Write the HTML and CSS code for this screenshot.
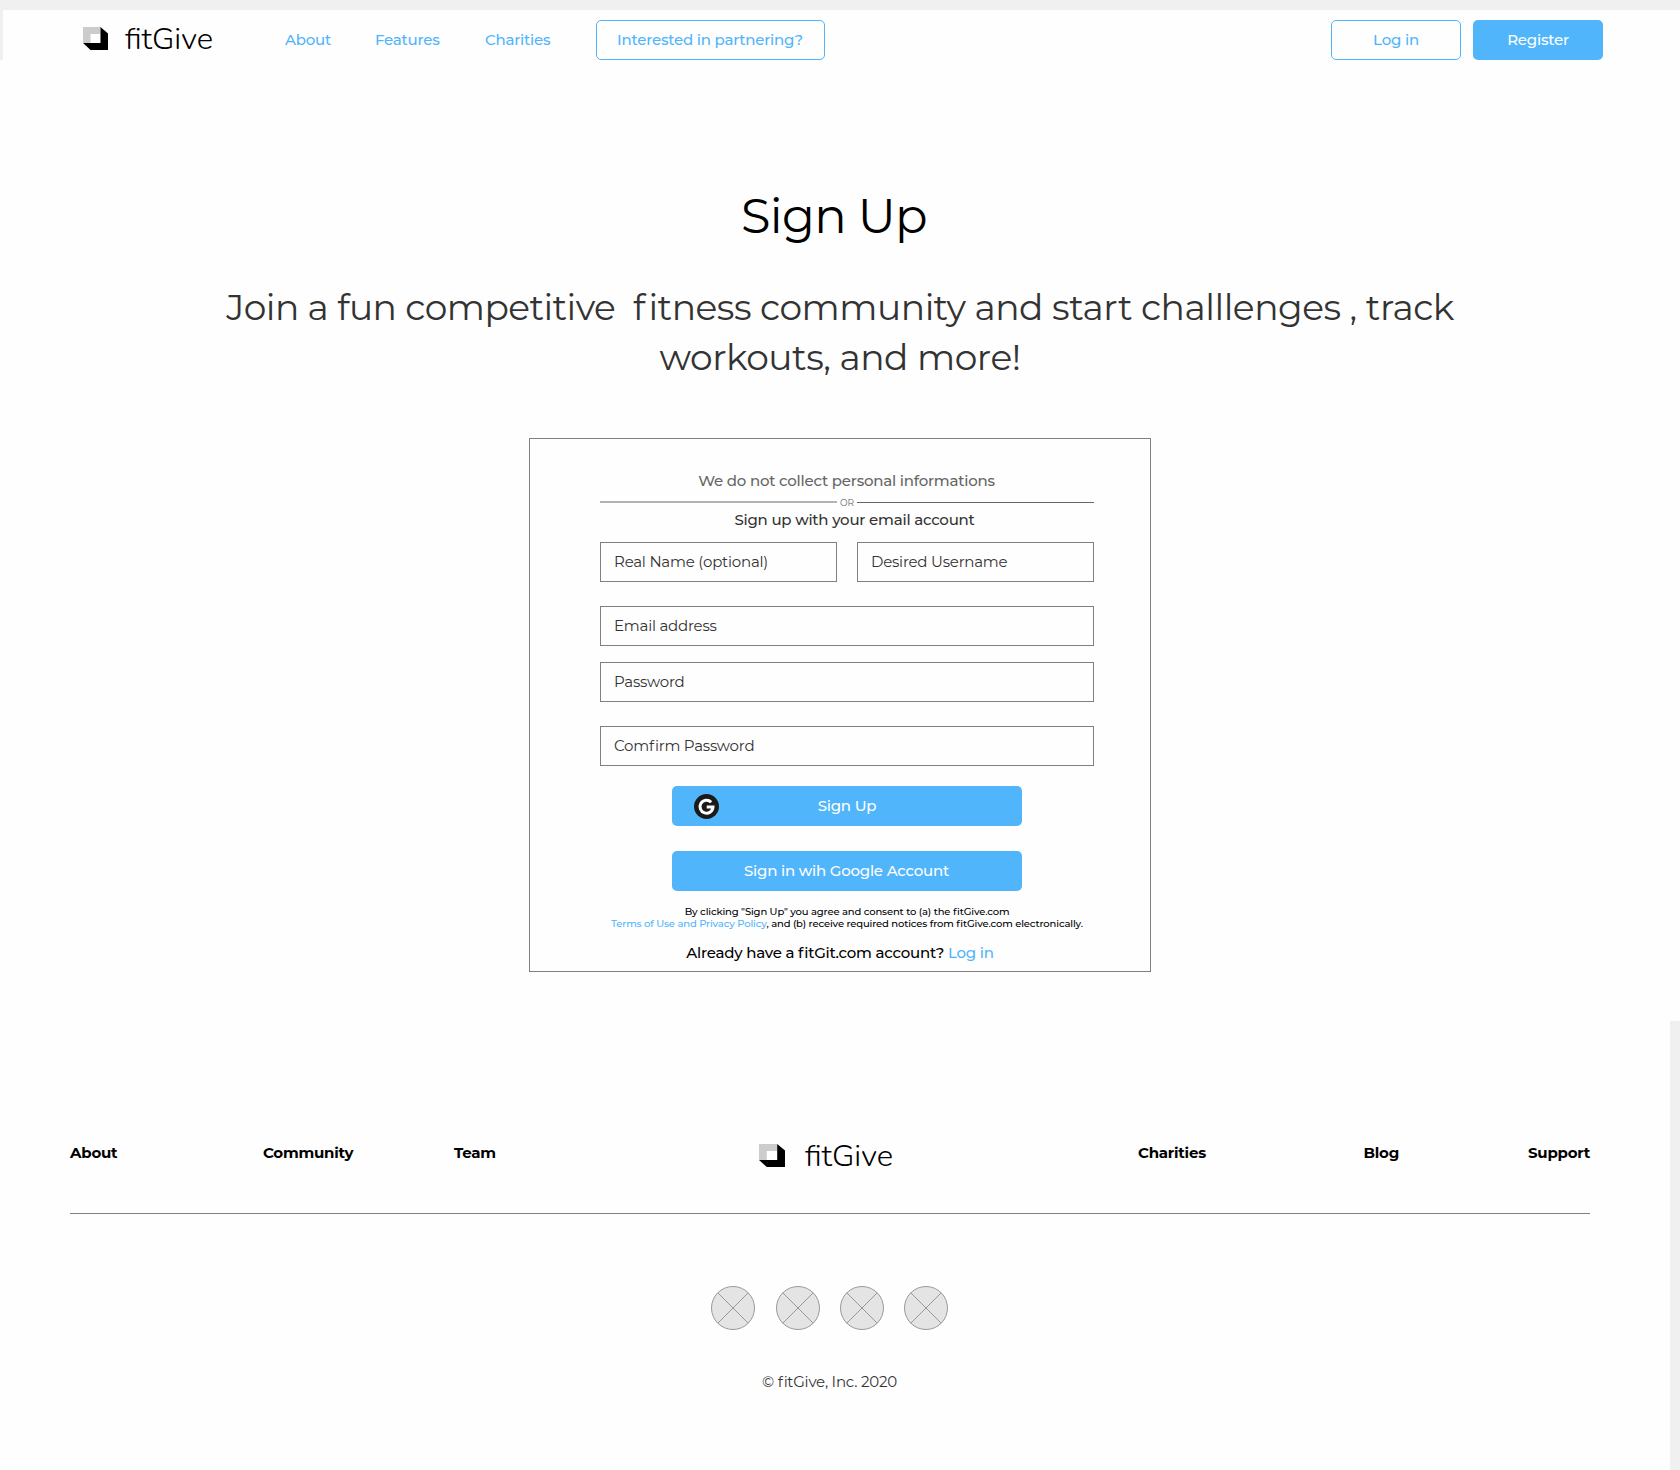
FILE: index.html
```html
<!DOCTYPE html>
<html lang="en">
<head>
<meta charset="utf-8">
<title>fitGive - Sign Up</title>
<link rel="stylesheet" href="styles.css">
</head>
<body>
<header class="topbar">
  <a class="brand">
    <svg class="brand-mark" viewBox="0 0 25 23" preserveAspectRatio="none"><path fill="#ccc" d="M0 0h17.5v16H0z"/><path fill="#fff" d="M7.5 7h10v9h-10z"/><path d="M17.5 0 25 6.5V23H7.5L0 16h17.5z"/></svg>
    <span class="brand-name">fitGive</span>
  </a>
  <nav class="nav">
    <a>About</a>
    <a>Features</a>
    <a>Charities</a>
  </nav>
  <a class="btn outline partner">Interested in partnering?</a>
  <div class="actions">
    <a class="btn outline small">Log in</a>
    <a class="btn solid small">Register</a>
  </div>
</header>

<main class="main">
  <h1 class="title">Sign Up</h1>
  <p class="lead"><span class="lead-start">Join a fun competitive&nbsp; </span><span class="f">f</span>itness community and start challlenges , track<br>workouts, and more!</p>

  <form class="card">
    <p class="note">We do not collect personal informations</p>
    <div class="divider"><i class="rule thick"></i><span class="or">OR</span><i class="rule"></i></div>
    <p class="with-email">Sign up with your email account</p>
    <div class="pair">
      <div class="field">Real Name (optional)</div>
      <div class="field">Desired Username</div>
    </div>
    <div class="field f-mail">Email address</div>
    <div class="field f-pass">Password</div>
    <div class="field f-confirm">Com<span class="f">f</span>irm Password</div>
    <a class="btn solid wide">
      <svg class="google" viewBox="0 0 25 25"><circle cx="12.5" cy="12.5" r="12.5" fill="#1a1a1a"/><path d="M17.2 8.2A6.5 6.5 0 1 0 19 12.9H12.7" fill="none" stroke="#fff" stroke-width="3"/></svg>
      Sign Up
    </a>
    <a class="btn solid wide second">Sign in wih Google Account</a>
    <p class="legal">By clicking "Sign Up" you agree and consent to (a) the <span class="f">f</span>itGive.com<br><a class="link">Terms of Use and Privacy Policy</a>, and (b) receive required notices from <span class="f">f</span>itGive.com electronically.</p>
    <p class="already">Already have a <span class="f">f</span>itGit.com account? <a class="link">Log in</a></p>
  </form>
</main>

<footer class="footer">
  <div class="footer-nav">
    <a>About</a>
    <a>Community</a>
    <a>Team</a>
    <a class="brand">
      <svg class="brand-mark" viewBox="0 0 25 23" preserveAspectRatio="none"><path fill="#ccc" d="M0 0h17.5v16H0z"/><path fill="#fff" d="M7.5 7h10v9h-10z"/><path d="M17.5 0 25 6.5V23H7.5L0 16h17.5z"/></svg>
      <span class="brand-name">fitGive</span>
    </a>
    <a>Charities</a>
    <a>Blog</a>
    <a>Support</a>
  </div>
  <div class="social">
    <svg viewBox="0 0 44 44"><circle cx="22" cy="22" r="21.5"/><path d="m6.8 6.8 30.4 30.4m0-30.4L6.8 37.2"/></svg>
    <svg viewBox="0 0 44 44"><circle cx="22" cy="22" r="21.5"/><path d="m6.8 6.8 30.4 30.4m0-30.4L6.8 37.2"/></svg>
    <svg viewBox="0 0 44 44"><circle cx="22" cy="22" r="21.5"/><path d="m6.8 6.8 30.4 30.4m0-30.4L6.8 37.2"/></svg>
    <svg viewBox="0 0 44 44"><circle cx="22" cy="22" r="21.5"/><path d="m6.8 6.8 30.4 30.4m0-30.4L6.8 37.2"/></svg>
  </div>
  <p class="copyright">© <span class="f">f</span>itGive, Inc. 2020</p>
</footer>
</body>
</html>
```
FILE: styles.css
```css
* { box-sizing: border-box; }
body {
  margin: 0;
  width: 1680px;
  height: 1470px;
  background: #fefefe;
  color: #000;
  font: 400 15px/20px Montserrat, Inter, sans-serif;
  letter-spacing: -0.22px;
  white-space: nowrap;
}
p, h1 { margin: 0; }
/* keeps the f clear of the i that follows it */
.f { letter-spacing: 0.06em; }

.topbar {
  display: flex;
  height: 60px;
  padding: 10px 77px 0 80px;
  border-top: 10px solid #f0f0f0;
  border-left: 3px solid #f0f0f0;
}
.brand { display: flex; width: 202px; height: 40px; }
.brand-mark { width: 25px; height: 23px; margin: 7px 17px 0 0; }
.brand-name {
  margin-top: -1px;
  font: 300 31px/40px Nunito, "Open Sans", sans-serif;
  letter-spacing: normal;
}
.nav {
  display: grid;
  grid-template-columns: 90px 110px 111px;
  line-height: 39px;
  color: #50b5fb;
}
.nav, .btn { font-weight: 500; }
.btn {
  display: flex;
  align-items: center;
  justify-content: center;
  height: 40px;
  padding-bottom: 1px;
  border-radius: 5px;
}
.outline { border: 1px solid #50b5fb; color: #50b5fb; }
.solid { background: #50b5fb; color: #fff; }
.partner { width: 229px; padding-right: 1px; }
.small { width: 130px; }
.actions { display: flex; gap: 12px; margin-left: auto; }

.main { padding-top: 126px; }
.title {
  padding-right: 12px;
  font-size: 48px;
  font-weight: 400;
  line-height: 60px;
  letter-spacing: -0.72px;
  text-align: center;
}
.lead {
  margin-top: 36px;
  font-size: 36px;
  line-height: 50px;
  letter-spacing: -0.46px;
  color: #333;
  text-align: center;
}
.lead-start { letter-spacing: -0.53px; }
.lead .f { letter-spacing: 0.09em; }
.card {
  width: 622px;
  height: 534px;
  margin: 56px auto 0;
  padding: 32px 56px 0 70px;
  border: 1px solid #808080;
}
.note { padding-right: 1px; color: #666; text-align: center; font-weight: 500; }
.divider { display: flex; align-items: center; height: 20px; margin-top: 1px; }
.rule { flex: 1; height: 1px; background: #666; }
.thick { height: 2px; background: #b3b3b3; }
.or { width: 20px; padding-top: 2px; font-size: 9px; letter-spacing: 0; color: #666; text-align: center; }
.with-email { margin-top: -2px; padding-left: 15px; color: #333; font-weight: 500; text-align: center; }
.pair { display: grid; grid-template-columns: 1fr 1fr; gap: 20px; margin-top: 12px; }
.field {
  height: 40px;
  padding-left: 13px;
  border: 1px solid #808080;
  color: #333;
  line-height: 37px;
}
.f-mail { margin-top: 24px; }
.f-pass { margin-top: 16px; }
.f-confirm { margin-top: 24px; }
.wide { position: relative; width: 350px; margin: 20px auto 0; }
.second { margin-top: 25px; padding-right: 1px; }
.google { position: absolute; left: 22px; top: 7.5px; width: 25px; height: 25px; }
.legal {
  margin: 15px -20px 0;
  font-size: 10px;
  font-weight: 500;
  line-height: 12px;
  letter-spacing: -0.135px;
  text-align: center;
}
.already { margin-top: 13px; padding-right: 14px; text-align: center; font-weight: 500; }
.link { color: #50b5fb; }

.footer {
  height: 449px;
  margin-top: 49px;
  padding: 112px 80px 0 70px;
  border-right: 10px solid #f0f0f0;
}
.footer-nav {
  display: grid;
  grid-template-columns: 193px 191px 305px 379px 225.5px 164.5px 62px;
  height: 81px;
  border-bottom: 1px solid #808080;
  font-weight: 700;
  line-height: 40px;
}
.footer .brand-mark { width: 26px; margin: 11px 20px 0 0; }
.footer .brand-name { margin-top: 3px; }
.social { display: flex; gap: 20px; margin: 72px 0 0 641px; }
.social svg { width: 44px; height: 44px; fill: #e4e4e4; stroke: #999; }
.social svg:first-child { margin-right: 1px; }
.copyright { margin: 42px 0 0 692px; color: #333; }
```
